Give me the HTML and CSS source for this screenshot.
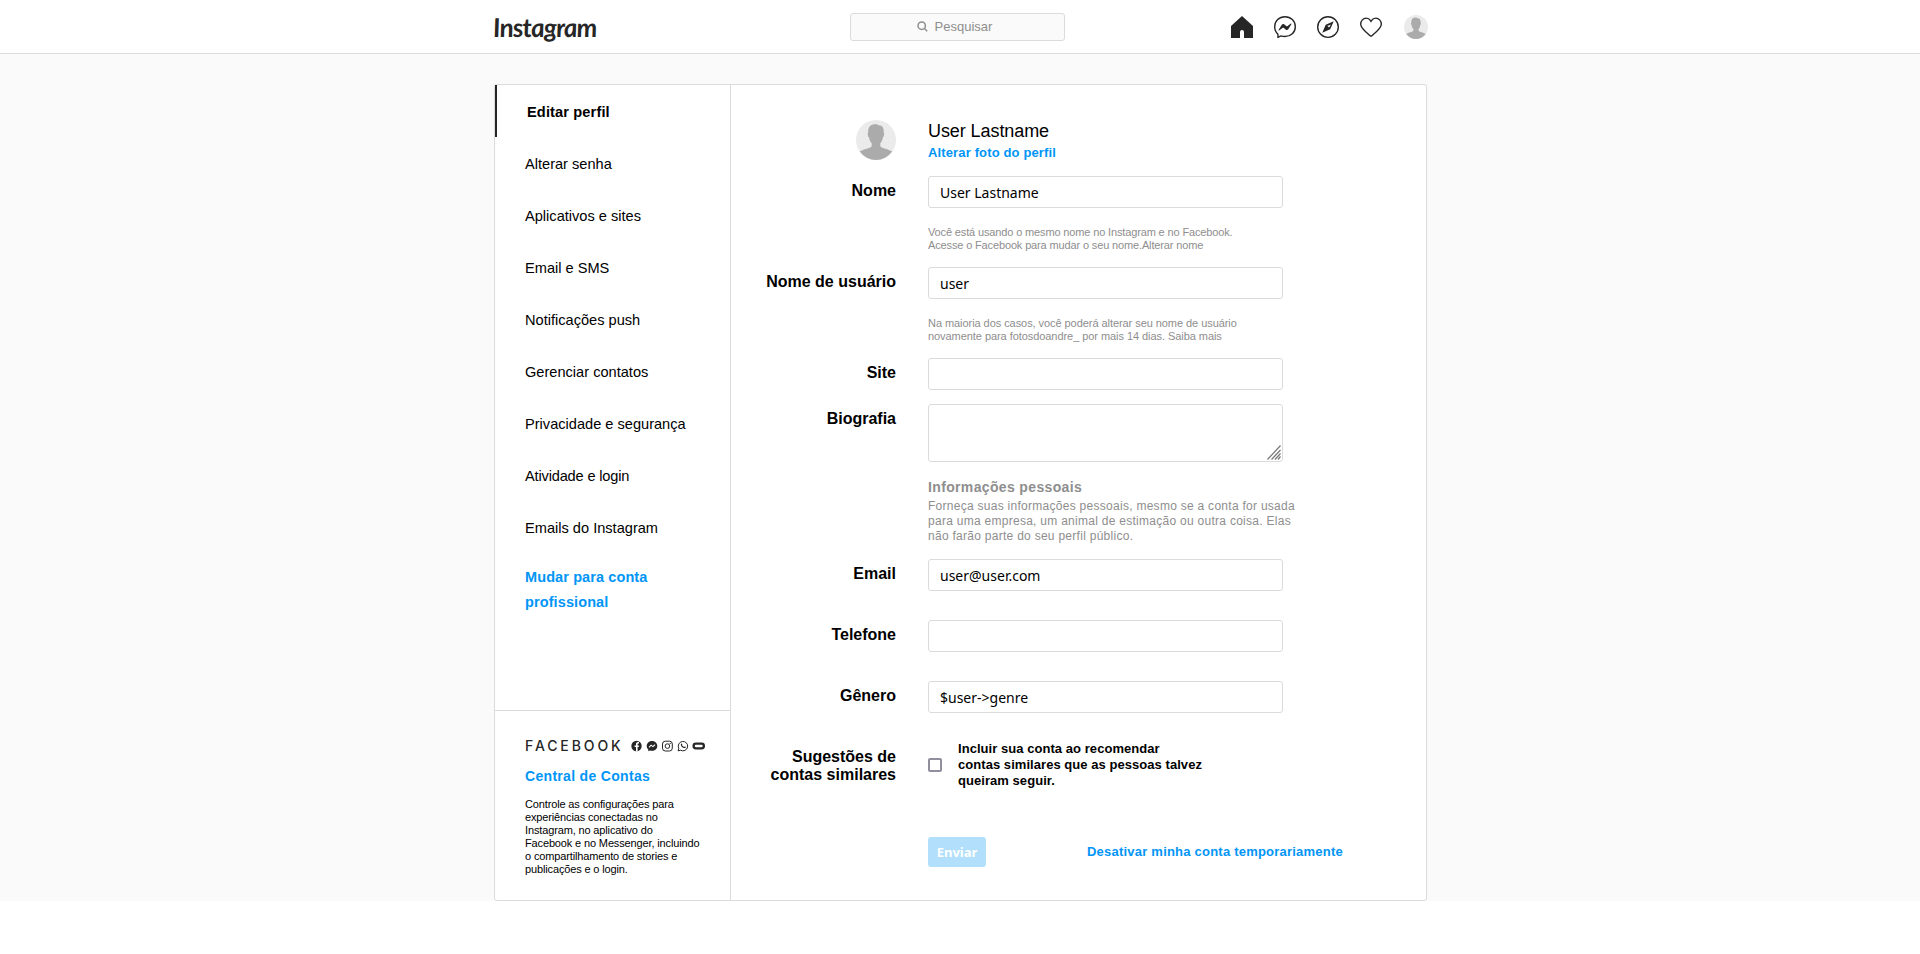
FILE: index.html
```html
<!DOCTYPE html>
<html lang="pt-BR">
<head>
<meta charset="utf-8">
<title>Editar perfil</title>
<link rel="stylesheet" href="styles.css">
</head>
<body>
<svg width="0" height="0" class="defs">
  <symbol id="avatar" viewBox="0 0 40 40">
    <circle cx="20" cy="20" r="20" fill="#ebebeb"/>
    <path d="M12.200 12.500c-.4-5.500 2.500-8.300 7.300-8.300 1.500 0 2.600.6 3.300 1.100 4 .2 5.300 3.300 4.900 7.300.9 1 .4 4.200-.8 4.700-.3 2.700-1.500 4.700-2.600 6v2.900c1.500 2.200 8 2.700 11.900 5.400A20 20 0 0 1 3.700 31.600c4-2.700 10.500-3.200 12-5.400v-2.900c-1.200-1.300-2.400-3.300-2.700-6-1.200-.5-1.700-3.700-.8-4.800z" fill="#ababab"/>
  </symbol>
</svg>
<header class="topbar">
  <div class="topbar-inner">
    <a class="logo">Instagram</a>
    <div class="search">
      <svg width="11" height="11" viewBox="0 0 11 11" fill="none" stroke="#8e8e8e" stroke-width="1.500"><circle cx="4.700" cy="4.700" r="3.700"/><path d="M7.500 7.500l2.700 2.700"/></svg>
      <span>Pesquisar</span>
    </div>
    <nav class="icons">
      <svg width="22" height="22" viewBox="0 0 22 22"><path d="M11 0L0 10v12h9v-6a2 2 0 0 1 4 0V22H22V10z" fill="#262626"/></svg>
      <svg width="22" height="22" viewBox="0 0 48 48" fill="#262626"><path d="M36.200 16.700L29 22.200c-.5.4-1.200.4-1.700 0l-5.300-4c-1.600-1.200-3.900-.8-5 .9l-6.800 10.700c-.7 1 .6 2.200 1.600 1.500l7.300-5.500c.5-.4 1.200-.4 1.700 0l5.300 4c1.600 1.200 3.900.8 5-.9l6.800-10.700c.6-1.100-.7-2.200-1.700-1.500z"/><path d="M24 1.500C11.300 1.500 1.500 10.800 1.500 23.400c0 6.600 2.700 12.300 7.100 16.200v7l6.500-3.100c2.800.8 5.700 1.200 8.900 1.200 12.700 0 22.500-9 22.500-21.300S36.700 1.500 24 1.500z" fill="none" stroke="#262626" stroke-width="3"/></svg>
      <svg width="22" height="22" viewBox="0 0 48 48"><circle cx="24" cy="24" r="22.500" fill="none" stroke="#262626" stroke-width="3"/><path fill-rule="evenodd" d="M36.500 11.500L19 19.200 11.500 36.500 28.800 29zM25.500 20.500l4.500-2-2 4.500-2 2-3.500-3.500z" fill="#262626"/></svg>
      <svg width="22" height="22" viewBox="0 0 48 48"><path d="M34.600 4.600c-4 0-7.300 1.900-9.600 5.400l-1 1.700-1-1.700c-2.300-3.500-5.600-5.400-9.600-5.400C7 4.600 1.500 10.400 1.500 17.700c0 7.300 6 12.300 11.500 17.200l9 8c1.300 1.100 2.700 1.100 4 0l9-8c5.500-4.900 11.500-9.900 11.500-17.200 0-7.300-5.500-13.100-11.900-13.100z" fill="none" stroke="#262626" stroke-width="3"/></svg>
      <svg class="me" width="24" height="24"><use href="#avatar"/></svg>
    </nav>
  </div>
</header>
<main class="page">
  <div class="card">
    <aside class="side">
      <ul class="menu">
        <li class="active">Editar perfil</li>
        <li>Alterar senha</li>
        <li>Aplicativos e sites</li>
        <li>Email e SMS</li>
        <li>Notificações push</li>
        <li>Gerenciar contatos</li>
        <li>Privacidade e segurança</li>
        <li class="tight">Atividade e login</li>
        <li>Emails do Instagram</li>
      </ul>
      <a class="pro">Mudar para conta<br>profissional</a>
      <section class="accounts">
        <div class="brand">
          <span class="fb">FACEBOOK</span>
          <svg width="75" height="12" viewBox="0 0 75 12">
            <circle cx="5.500" cy="6" r="5.200" fill="#262626"/><path d="M5 11.200V7H3.600V5.400H5V4.200c0-1.400.8-2.100 2.200-2.100h.8v1.400h-.7c-.5 0-.7.3-.7.8v1.100H8L7.800 7H6.600v4.200z" fill="#fff"/>
            <path d="M21 .9c-3 0-5.300 2.200-5.300 5 0 1.500.6 2.700 1.600 3.600v1.700l1.600-.7c.7.2 1.400.3 2.100.3 3 0 5.300-2.200 5.300-4.900S24 .9 21 .9z" fill="#262626"/><path d="M18 7.400l2.100-2.200 1.700 1.400L24 4.800" fill="none" stroke="#fff" stroke-width="1.100"/>
            <g fill="none" stroke="#262626"><rect x="31.500" y="1.200" width="9.800" height="9.800" rx="2.800"/><circle cx="36.400" cy="6.100" r="2.300"/><path d="M47.100 10.900l.7-2.600a4.700 4.700 0 1 1 1.800 1.900z"/></g><circle cx="39.200" cy="3.400" r=".6" fill="#262626"/>
            <path d="M50 4c.4-.8.900-.6 1.200.2.300.7-.3.800 0 1.300.5.700 1 1.100 1.700 1.400.5.100.6-.8 1.200-.4 1 .5.900.7.400 1.200C53 9.300 49 5.900 50 4z" fill="#262626"/>
            <rect x="62.600" y="3.700" width="10.300" height="4.600" rx="2.300" fill="none" stroke="#262626" stroke-width="2.300"/>
          </svg>
        </div>
        <a class="center">Central de Contas</a>
        <p class="about">Controle as configurações para<br>experiências conectadas no<br>Instagram, no aplicativo do<br>Facebook e no Messenger, incluindo<br>o compartilhamento de stories e<br>publicações e o login.</p>
      </section>
    </aside>
    <form class="form">
      <div class="row profile">
        <svg class="photo" width="40" height="40"><use href="#avatar"/></svg>
        <div><h1>User Lastname</h1><a class="link">Alterar foto do perfil</a></div>
      </div>
      <div class="row hinted">
        <label>Nome</label>
        <div><div class="input">User Lastname</div><p class="hint">Você está usando o mesmo nome no Instagram e no Facebook.<br>Acesse o Facebook para mudar o seu nome.Alterar nome</p></div>
      </div>
      <div class="row hinted">
        <label>Nome de usuário</label>
        <div><div class="input">user</div><p class="hint wide">Na maioria dos casos, você poderá alterar seu nome de usuário<br>novamente para fotosdoandre_ por mais 14 dias. Saiba mais</p></div>
      </div>
      <div class="row site"><label>Site</label><div class="input"></div></div>
      <div class="row bio">
        <label>Biografia</label>
        <div class="textarea"><svg width="14" height="15" viewBox="0 0 14 15" stroke="#777" stroke-width="1.200"><path d="M.5 14.500L13.500.5M4.500 14.500l9-9.500M8 14.500l5.500-6M11 14.500l2.500-3"/></svg></div>
      </div>
      <div class="row info"><span></span><div><h2>Informações pessoais</h2><p>Forneça suas informações pessoais, mesmo se a conta for usada<br>para uma empresa, um animal de estimação ou outra coisa. Elas<br>não farão parte do seu perfil público.</p></div></div>
      <div class="row spaced"><label>Email</label><div class="input">user@user.com</div></div>
      <div class="row spaced"><label>Telefone</label><div class="input"></div></div>
      <div class="row spaced"><label>Gênero</label><div class="input">$user-&gt;genre</div></div>
      <div class="row suggest">
        <label>Sugestões de<br>contas similares</label>
        <div class="check"><i class="box"></i><p>Incluir sua conta ao recomendar<br>contas similares que as pessoas talvez<br>queiram seguir.</p></div>
      </div>
      <div class="row"><span></span><div class="actions"><button type="button">Enviar</button><a class="link">Desativar minha conta temporariamente</a></div></div>
    </form>
  </div>
</main>
</body>
</html>
```
FILE: styles.css
```css
* { box-sizing: border-box; }
body { margin: 0; background: #fff; color: #000; font-family: "Liberation Sans", Arial, sans-serif; }
h1, h2, p, ul { margin: 0; padding: 0; }
ul { list-style: none; }
svg { display: block; flex: none; }
.defs { position: absolute; }

.topbar { height: 54px; border-bottom: 1px solid #dbdbdb; background: #fff; }
.topbar-inner { width: 936px; height: 53px; margin: 0 auto; padding-left: 1px; display: grid; grid-template-columns: 357px 215px 1fr; align-items: center; }
.logo { justify-self: start; font: italic bold 26px/30px Lato, sans-serif; letter-spacing: -.8px; color: #262626; transform: skewX(5deg); }
.search { height: 28px; border: 1px solid #dbdbdb; border-radius: 3px; background: #fafafa; display: flex; align-items: center; justify-content: center; gap: 7px; padding-right: 6px; font-size: 13px; color: #8e8e8e; }
.icons { display: flex; gap: 21px; justify-content: flex-end; align-items: center; }
.me { margin-left: 1px; }

.page { background: #fafafa; padding: 30px 0 0 1px; }
.card { width: 933px; height: 817px; margin: 0 auto; background: #fff; border: 1px solid #dbdbdb; border-radius: 3px; display: flex; }
.side { width: 236px; border-right: 1px solid #dbdbdb; display: flex; flex-direction: column; }
.menu li { height: 52px; line-height: 54px; padding-left: 30px; font-size: 14.6px; }
.menu .active { border-left: 2px solid #262626; font-weight: bold; letter-spacing: .13px; }
.menu .tight { letter-spacing: -.17px; }
.pro { padding: 12px 30px 0; font-size: 14.5px; letter-spacing: .1px; font-weight: bold; line-height: 25px; color: #0095f6; }
.accounts { margin-top: auto; height: 190px; border-top: 1px solid #dbdbdb; padding: 28px 0 0 30px; }
.brand { display: flex; align-items: center; height: 13px; gap: 7px; }
.fb { font: 500 14px/13px Inter, sans-serif; color: #262626; letter-spacing: 2.9px; }
.center { display: block; margin-top: 14px; font-size: 14px; letter-spacing: .31px; line-height: 20px; font-weight: bold; color: #0095f6; }
.about { margin-top: 12px; font-size: 11px; letter-spacing: -.14px; line-height: 13px; }

.form { padding-top: 35px; flex: 1; }
.row { display: grid; grid-template-columns: 165px 1fr; column-gap: 32px; align-items: start; }
label { padding-top: 6px; font-size: 16px; line-height: 18px; font-weight: bold; text-align: right; }
.photo { justify-self: end; }
.profile { height: 56px; }
.hinted { height: 91px; }
.site { height: 46px; }
.bio { height: 73px; }
.info { height: 82px; color: #8e8e8e; }
.spaced { height: 61px; }
.suggest { height: 95px; }
h1 { font-size: 18px; line-height: 22px; font-weight: normal; letter-spacing: -.08px; }
.link { display: block; font-size: 13px; letter-spacing: .14px; line-height: 22px; font-weight: bold; color: #0095f6; }
.input, .textarea { width: 355px; height: 32px; border: 1px solid #dbdbdb; border-radius: 3px; }
.input { padding-left: 11px; font: 14px/32px "Noto Sans", sans-serif; }
.textarea { height: 58px; display: flex; justify-content: flex-end; align-items: flex-end; padding: 1px; }
.hint { margin-top: 18px; font-size: 11px; letter-spacing: -.14px; line-height: 13px; color: #8e8e8e; }
.hint.wide { letter-spacing: -.06px; }
.info h2 { font-size: 14px; letter-spacing: .35px; line-height: 20px; }
.info p { margin-top: 2px; font-size: 12px; letter-spacing: .275px; line-height: 15px; }
.check { display: flex; gap: 16px; align-items: flex-start; }
.box { width: 14px; height: 14px; margin-top: 16px; border: 2px solid #8f8f9d; border-radius: 2px; }
.check p { margin-top: -1px; font-size: 13px; letter-spacing: .05px; line-height: 16px; font-weight: bold; }
.actions { display: flex; gap: 101px; }
button { width: 58px; height: 30px; padding: 0; border: 0; border-radius: 3px; background: #b2dffc; color: #fff; font: bold 13px/30px "Noto Sans", sans-serif; }
.actions .link { line-height: 29px; letter-spacing: .22px; }
```
